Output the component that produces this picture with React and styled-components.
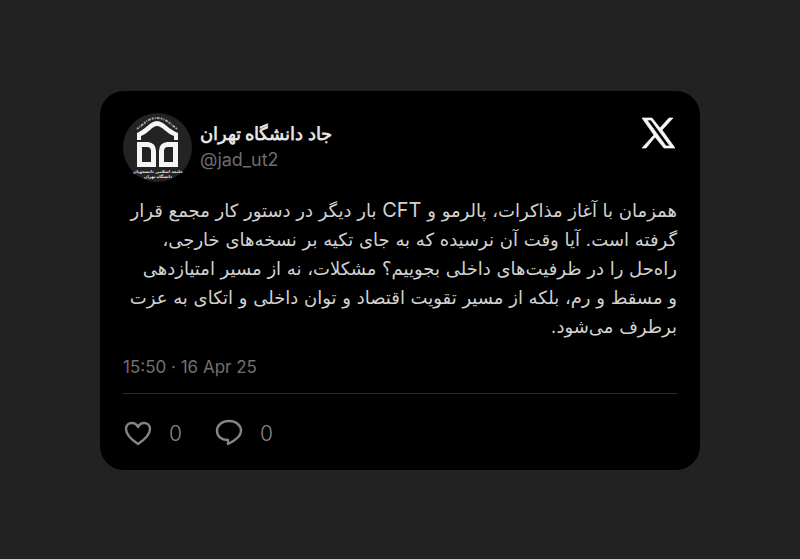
import React from "react";
import styled, { createGlobalStyle } from "styled-components";

const GlobalStyle = createGlobalStyle`
  * { box-sizing: border-box; }
  body {
    margin: 0;
    background: #222222;
    font-family: Inter, "DejaVu Sans", sans-serif;
  }
`;

const Page = styled.main`
  min-height: 100vh;
  display: flex;
  align-items: center;
  justify-content: center;
  padding: 26px 24px 24px;
`;

const Card = styled.article`
  width: 100%;
  max-width: 600px;
  padding: 22px 23px 20px;
  border-radius: 24px;
  background: #000000;
`;

const Header = styled.header`
  display: flex;
  align-items: flex-start;
  gap: 8px;
`;

const Avatar = styled.svg`
  flex: none;
  width: 69px;
  height: 69px;
`;

const Author = styled.div`
  flex: 1;
  padding-top: 7px;
`;

const Name = styled.h1`
  margin: 0;
  width: fit-content;
  font-family: Roboto, "Noto Sans", sans-serif;
  font-size: 18px;
  line-height: 28px;
  font-weight: 700;
  color: #e4e4e4;
`;

const Handle = styled.a`
  display: block;
  width: fit-content;
  font-size: 18px;
  line-height: 24px;
  color: #6d6d70;
  text-decoration: none;
`;

const Logo = styled.svg`
  flex: none;
  width: 34px;
  height: 34px;
  margin: 3px 2px 0 0;
`;

const Body = styled.p`
  margin: 14px 0 0;
  font-family: "DejaVu Sans", sans-serif;
  font-size: 18px;
  line-height: 29px;
  color: #d2d2d2;
`;

const Line = styled.span`
  display: block;
`;

const Latin = styled.bdi`
  font-family: Inter, sans-serif;
  font-size: 20px;
  line-height: 20px;
`;

const Time = styled.time`
  display: block;
  margin-top: 14px;
  padding-bottom: 14px;
  border-bottom: 1px solid #2c2c2c;
  font-size: 17px;
  line-height: 24px;
  color: #707072;
`;

const Actions = styled.footer`
  display: flex;
  gap: 32px;
  margin-top: 24px;
`;

const Action = styled.button`
  display: flex;
  align-items: center;
  gap: 16px;
  padding: 0;
  border: 0;
  background: none;
  color: #858587;
  font: inherit;
  font-size: 21px;
  font-weight: 300;
  line-height: 32px;
  cursor: pointer;
`;

const Icon = styled.svg`
  width: 30px;
  height: 30px;
  fill: none;
  stroke: currentColor;
  stroke-width: 2.4;
  stroke-linejoin: round;
`;

const SealText = styled.text`
  font-family: "DejaVu Sans", sans-serif;
  font-weight: 700;
  font-size: 4px;
  fill: #e8e8e8;
  text-anchor: middle;
`;

function Seal() {
  return (
    <Avatar viewBox="0 0 69 69" role="img" aria-label="جاد دانشگاه تهران">
      <circle cx="34.5" cy="34.5" r="34.5" fill="#232323" />
      <path
        d="M14 16 L24 8 Q34 2 44 8 L54 16"
        fill="none"
        stroke="#a5a5a5"
        strokeWidth="2"
        strokeDasharray="2 1 1 1 3 1"
      />
      <path
        d="M14 27 V20 C22 17 27 8 34 8 C41 8 46 17 55 20 V27 H51 V23 C43 20 39 13 34 13 C29 13 26 20 18 23 V27 Z"
        fill="#f5f5f5"
      />
      <path
        d="M14 29 H25 Q33 30 33 38 V54 H14 Z M19 34 V49 H28 V38 Q28 34 24 34 Z"
        fill="#f5f5f5"
        fillRule="evenodd"
      />
      <path
        d="M55 29 H44 Q36 30 36 38 V54 H55 Z M50 34 V49 H41 V38 Q41 34 45 34 Z"
        fill="#f5f5f5"
        fillRule="evenodd"
      />
      <SealText x="35" y="60">جامعه اسلامی دانشجویان</SealText>
      <SealText x="35" y="65">دانشگاه تهران</SealText>
    </Avatar>
  );
}

export default function App() {
  return (
    <>
      <GlobalStyle />
      <Page>
        <Card>
          <Header>
            <Seal />
            <Author>
              <Name dir="rtl" lang="fa">جاد دانشگاه تهران</Name>
              <Handle href="#jad_ut2">@jad_ut2</Handle>
            </Author>
            <Logo viewBox="0 0 34 34" role="img" aria-label="X">
              <path
                d="M1 2 H11 L19 12 L28 2 H32 L21 14 L34 32 H23 L14 21 L5 32 H1 L13 19 Z M6 4 L25 30 H29 L10 4 Z"
                fill="#f7f7f7"
                stroke="#f7f7f7"
                strokeWidth="0.7"
                fillRule="evenodd"
              />
            </Logo>
          </Header>
          <Body dir="rtl" lang="fa">
            <Line>همزمان با آغاز مذاکرات، پالرمو و <Latin>CFT</Latin> بار دیگر در دستور کار مجمع قرار</Line>
            <Line>گرفته است. آیا وقت آن نرسیده که به جای تکیه بر نسخه‌های خارجی،</Line>
            <Line>راه‌حل را در ظرفیت‌های داخلی بجوییم؟ مشکلات، نه از مسیر امتیازدهی</Line>
            <Line>و مسقط و رم، بلکه از مسیر تقویت اقتصاد و توان داخلی و اتکای به عزت</Line>
            <Line>برطرف می‌شود.</Line>
          </Body>
          <Time dateTime="2025-04-16T15:50">15:50 · 16 Apr 25</Time>
          <Actions>
            <Action type="button" aria-label="Like, 0">
              <Icon viewBox="0 0 30 30">
                <path d="M15 25 C9 21 3 16 3 10 C3 6 6 4 9 4 C12 4 14 6 15 8 C16 6 18 4 21 4 C24 4 27 6 27 10 C27 16 21 21 15 25 Z" />
              </Icon>
              0
            </Action>
            <Action type="button" aria-label="Reply, 0">
              <Icon viewBox="0 0 30 30">
                <path d="M14 21 C7 21 3 17 3 12 C3 6 8 2 15 2 C22 2 27 6 27 12 C27 18 20 22 14 25 Z" />
              </Icon>
              0
            </Action>
          </Actions>
        </Card>
      </Page>
    </>
  );
}
